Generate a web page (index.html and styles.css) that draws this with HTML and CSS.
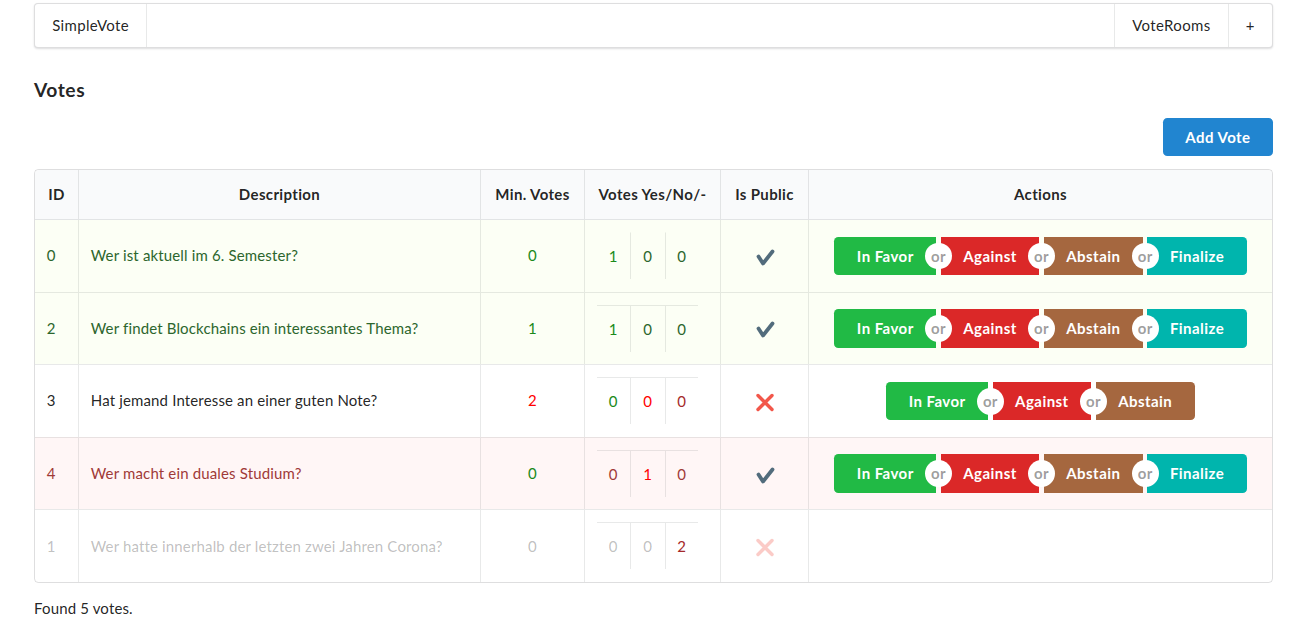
FILE: index.html
```html
<!DOCTYPE html>
<html lang="de">
<head>
<meta charset="utf-8">
<title>SimpleVote</title>
<link rel="stylesheet" href="styles.css">
</head>
<body>
<div class="page">
  <nav class="menu">
    <a class="item brand">SimpleVote</a>
    <div class="spacer"></div>
    <a class="item divided">VoteRooms</a>
    <a class="item divided">+</a>
  </nav>

  <h3 class="title">Votes</h3>

  <div class="toolbar">
    <button class="btn primary">Add Vote</button>
  </div>

  <table class="votes">
    <thead>
      <tr>
        <th class="c-id">ID</th>
        <th class="c-desc">Description</th>
        <th class="c-min">Min. Votes</th>
        <th class="c-count">Votes Yes/No/-</th>
        <th class="c-pub">Is Public</th>
        <th class="c-act">Actions</th>
      </tr>
    </thead>
    <tbody>
      <tr class="positive">
        <td>0</td>
        <td>Wer ist aktuell im 6. Semester?</td>
        <td class="center"><span class="green">0</span></td>
        <td>
          <table class="counts first"><tr><td class="green">1</td><td>0</td><td>0</td></tr></table>
        </td>
        <td class="center"><svg class="ico" width="20" height="19" viewBox="0 0 20 19"><path d="M3.5 8.5 L8 15.5 L17.5 3.5" fill="none" stroke="#526c7c" stroke-width="3.8" stroke-linecap="round" stroke-linejoin="round"/></svg></td>
        <td class="center">
          <div class="buttons">
            <button class="btn green-b">In Favor</button><span class="or"></span><button class="btn red-b">Against</button><span class="or"></span><button class="btn brown-b">Abstain</button><span class="or"></span><button class="btn teal-b">Finalize</button>
          </div>
        </td>
      </tr>
      <tr class="positive">
        <td>2</td>
        <td>Wer findet Blockchains ein interessantes Thema?</td>
        <td class="center"><span class="green">1</span></td>
        <td>
          <table class="counts"><tr><td class="green">1</td><td>0</td><td>0</td></tr></table>
        </td>
        <td class="center"><svg class="ico" width="20" height="19" viewBox="0 0 20 19"><path d="M3.5 8.5 L8 15.5 L17.5 3.5" fill="none" stroke="#526c7c" stroke-width="3.8" stroke-linecap="round" stroke-linejoin="round"/></svg></td>
        <td class="center">
          <div class="buttons">
            <button class="btn green-b">In Favor</button><span class="or"></span><button class="btn red-b">Against</button><span class="or"></span><button class="btn brown-b">Abstain</button><span class="or"></span><button class="btn teal-b">Finalize</button>
          </div>
        </td>
      </tr>
      <tr>
        <td>3</td>
        <td>Hat jemand Interesse an einer guten Note?</td>
        <td class="center"><span class="red">2</span></td>
        <td>
          <table class="counts"><tr><td class="green">0</td><td class="red">0</td><td class="brown">0</td></tr></table>
        </td>
        <td class="center"><svg class="ico" width="20" height="19" viewBox="0 0 20 19"><path d="M3 2.5 L17 16.5 M17 2.5 L3 16.5" fill="none" stroke="#f2574a" stroke-width="3.4" stroke-linecap="round"/></svg></td>
        <td class="center">
          <div class="buttons">
            <button class="btn green-b">In Favor</button><span class="or"></span><button class="btn red-b">Against</button><span class="or"></span><button class="btn brown-b">Abstain</button>
          </div>
        </td>
      </tr>
      <tr class="negative">
        <td>4</td>
        <td>Wer macht ein duales Studium?</td>
        <td class="center"><span class="green">0</span></td>
        <td>
          <table class="counts"><tr><td>0</td><td class="red">1</td><td>0</td></tr></table>
        </td>
        <td class="center"><svg class="ico" width="20" height="19" viewBox="0 0 20 19"><path d="M3.5 8.5 L8 15.5 L17.5 3.5" fill="none" stroke="#526c7c" stroke-width="3.8" stroke-linecap="round" stroke-linejoin="round"/></svg></td>
        <td class="center">
          <div class="buttons">
            <button class="btn green-b">In Favor</button><span class="or"></span><button class="btn red-b">Against</button><span class="or"></span><button class="btn brown-b">Abstain</button><span class="or"></span><button class="btn teal-b">Finalize</button>
          </div>
        </td>
      </tr>
      <tr class="disabled">
        <td>1</td>
        <td>Wer hatte innerhalb der letzten zwei Jahren Corona?</td>
        <td class="center">0</td>
        <td>
          <table class="counts"><tr><td>0</td><td>0</td><td class="brown">2</td></tr></table>
        </td>
        <td class="center"><svg class="ico faded" width="20" height="19" viewBox="0 0 20 19"><path d="M3 2.5 L17 16.5 M17 2.5 L3 16.5" fill="none" stroke="#f2574a" stroke-width="3.4" stroke-linecap="round"/></svg></td>
        <td></td>
      </tr>
    </tbody>
  </table>

  <p class="found">Found 5 votes.</p>
</div>
</body>
</html>
```

FILE: styles.css
```css
html { box-sizing: border-box; }
*, *::before, *::after { box-sizing: inherit; }

body {
  margin: 0;
  font-family: "Lato", "Helvetica Neue", Arial, Helvetica, sans-serif;
  font-size: 15px;
  line-height: 1.4285em;
  letter-spacing: 0.15px;
  color: rgba(0, 0, 0, 0.87);
  background: #fff;
}

.page {
  width: 1239px;
  margin-left: 34px;
  padding-top: 3px;
}

/* top menu */
.menu {
  display: flex;
  min-height: 45px;
  background: #fff;
  border: 1px solid rgba(34, 36, 38, 0.15);
  border-radius: 4px;
  box-shadow: 0 1px 2px 0 rgba(34, 36, 38, 0.15);
}
.menu .item {
  display: flex;
  align-items: center;
  padding: 13.93px 17.14px;
  line-height: 1;
  letter-spacing: 0.35px;
  color: rgba(0, 0, 0, 0.87);
  cursor: pointer;
}
.menu .brand { border-right: 1px solid rgba(34, 36, 38, 0.1); }
.menu .divided { border-left: 1px solid rgba(34, 36, 38, 0.1); }
.menu .spacer { flex: 1; }

.title {
  font-size: 19.29px;
  font-weight: 700;
  line-height: 24.8px;
  letter-spacing: 0.5px;
  margin: 29.5px 0 0;
}

.toolbar {
  display: flex;
  justify-content: flex-end;
  margin-top: 15.6px;
}

/* buttons */
.btn {
  font-family: inherit;
  font-size: 15px;
  font-weight: 700;
  line-height: 1;
  letter-spacing: 0.45px;
  padding: 11.79px 22.5px;
  border: none;
  border-radius: 4.3px;
  color: #fff;
  cursor: pointer;
  margin: 0;
}
.primary { background: #2185d0; }

.buttons {
  display: inline-flex;
  vertical-align: middle;
}
.buttons .btn { border-radius: 0; }
.buttons .btn:first-child { border-radius: 4.3px 0 0 4.3px; }
.buttons .btn:last-child { border-radius: 0 4.3px 4.3px 0; }
.green-b { background: #21ba45; }
.red-b { background: #db2828; }
.brown-b { background: #a5673f; }
.teal-b { background: #00b5ad; }

.or {
  position: relative;
  width: 4.5px;
  z-index: 3;
}
.or::before {
  content: "or";
  position: absolute;
  top: 50%;
  left: 50%;
  width: 26.8px;
  height: 26.8px;
  margin-top: -13.4px;
  margin-left: -13.4px;
  line-height: 26.8px;
  border-radius: 50%;
  background: #fff;
  color: rgba(0, 0, 0, 0.4);
  font-weight: 700;
  font-size: 15px;
  letter-spacing: 0.3px;
  text-align: center;
}

/* table */
.votes {
  width: 1239px;
  margin-top: 12.5px;
  table-layout: fixed;
  border-collapse: separate;
  border-spacing: 0;
  border: 1px solid rgba(34, 36, 38, 0.15);
  border-radius: 4.3px;
  text-align: left;
}
.votes > thead > tr > th {
  background: #f9fafb;
  font-weight: 700;
  letter-spacing: 0.35px;
  text-align: center;
  padding: 13.93px 11.79px;
  border-bottom: 1px solid rgba(34, 36, 38, 0.1);
  border-left: 1px solid rgba(34, 36, 38, 0.1);
}
.votes > thead > tr > th:first-child { border-left: none; border-radius: 4.3px 0 0 0; }
.votes > thead > tr > th:last-child { border-radius: 0 4.3px 0 0; }

.c-id { width: 43px; }
.c-desc { width: 402px; }
.c-min { width: 104px; }
.c-count { width: 136px; }
.c-pub { width: 88px; }
.c-act { width: 464px; }

.votes > tbody > tr > td {
  padding: 11.79px;
  vertical-align: middle;
  border-top: 1px solid rgba(34, 36, 38, 0.1);
  border-left: 1px solid rgba(34, 36, 38, 0.1);
}
.votes > tbody > tr:first-child > td { border-top: none; }
.votes > tbody > tr > td:first-child { border-left: none; }
.votes > tbody > tr > td.center { text-align: center; }

.positive { background: #fcfff5; color: #2c662d; }
.negative { background: #fff6f6; color: #9f3a38; }
.disabled { color: rgba(40, 40, 40, 0.3); }

.green { color: #1a8a1a; }
.red { color: #ff0000; }
.brown { color: #a52a2a; }

/* inner counts table */
.counts {
  width: 101px;
  table-layout: fixed;
  border-collapse: separate;
  border-spacing: 0;
  border-bottom: 1px solid transparent;
}
.counts td {
  padding: 12px 0;
  line-height: 22px;
  text-align: center;
  border-top: 1px solid rgba(34, 36, 38, 0.1);
}
.counts.first td { border-top-color: transparent; }
.counts td:nth-child(1) { width: 33px; }
.counts td:nth-child(2) { width: 35px; border-left: 1px solid rgba(34, 36, 38, 0.1); }
.counts td:nth-child(3) { width: 33px; border-left: 1px solid rgba(34, 36, 38, 0.1); }

.ico { display: inline-block; vertical-align: middle; }
.ico.faded { opacity: 0.3; }

.found {
  margin: 14.5px 0 0;
}
```
